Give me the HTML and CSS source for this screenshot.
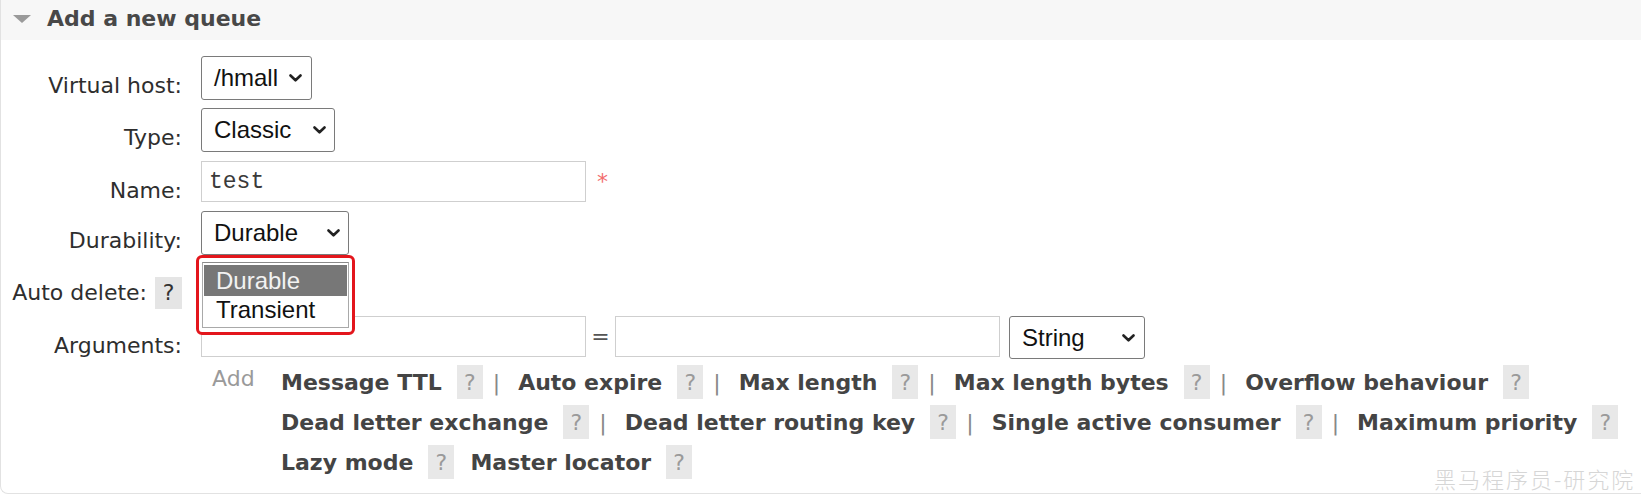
FILE: index.html
```html
<!DOCTYPE html>
<html lang="en">
<head>
<meta charset="utf-8">
<title>Add a new queue</title>
<link rel="stylesheet" href="styles.css">
</head>
<body>
<div class="panel">
  <div class="panel-head">
    <span class="tri"></span>
    <h2 class="title">Add a new queue</h2>
  </div>
  <div class="panel-body">
    <div class="row">
      <label class="lbl">Virtual host:</label>
      <div class="field">
        <div class="sel sel-vhost"><span>/hmall</span><svg class="chev" viewBox="0 0 13 8" width="13" height="8"><path d="M1.5 1.5 L6.5 6.3 L11.5 1.5" fill="none" stroke="#222" stroke-width="2.6" stroke-linecap="round" stroke-linejoin="round"/></svg></div>
      </div>
    </div>
    <div class="row row-type">
      <label class="lbl">Type:</label>
      <div class="field">
        <div class="sel sel-type"><span>Classic</span><svg class="chev" viewBox="0 0 13 8" width="13" height="8"><path d="M1.5 1.5 L6.5 6.3 L11.5 1.5" fill="none" stroke="#222" stroke-width="2.6" stroke-linecap="round" stroke-linejoin="round"/></svg></div>
      </div>
    </div>
    <div class="row row-name">
      <label class="lbl">Name:</label>
      <div class="field field-inline">
        <input class="inp inp-mono" type="text" value="test">
        <span class="req">*</span>
      </div>
    </div>
    <div class="row row-dur">
      <label class="lbl">Durability:</label>
      <div class="field field-dur">
        <div class="sel sel-dur"><span>Durable</span><svg class="chev" viewBox="0 0 13 8" width="13" height="8"><path d="M1.5 1.5 L6.5 6.3 L11.5 1.5" fill="none" stroke="#222" stroke-width="2.6" stroke-linecap="round" stroke-linejoin="round"/></svg></div>
        <div class="dropdown">
          <ul class="opts">
            <li class="opt-item is-active">Durable</li>
            <li class="opt-item">Transient</li>
          </ul>
        </div>
      </div>
    </div>
    <div class="row row-auto">
      <label class="lbl lbl-help"><span>Auto delete:</span><span class="qbox">?</span></label>
      <div class="field"></div>
    </div>
    <div class="row row-args">
      <label class="lbl">Arguments:</label>
      <div class="field field-inline">
        <input class="inp" type="text">
        <span class="eq">=</span>
        <input class="inp" type="text">
        <div class="sel sel-str"><span>String</span><svg class="chev" viewBox="0 0 13 8" width="13" height="8"><path d="M1.5 1.5 L6.5 6.3 L11.5 1.5" fill="none" stroke="#222" stroke-width="2.6" stroke-linecap="round" stroke-linejoin="round"/></svg></div>
      </div>
    </div>
    <div class="args-help">
      <span class="add">Add</span>
      <div class="help-lines">
        <div class="line">
          <span class="opt">Message TTL</span><span class="q">?</span><span class="sep">|</span>
          <span class="opt">Auto expire</span><span class="q">?</span><span class="sep">|</span>
          <span class="opt">Max length</span><span class="q">?</span><span class="sep">|</span>
          <span class="opt">Max length bytes</span><span class="q">?</span><span class="sep">|</span>
          <span class="opt">Overflow behaviour</span><span class="q">?</span>
        </div>
        <div class="line">
          <span class="opt">Dead letter exchange</span><span class="q">?</span><span class="sep">|</span>
          <span class="opt">Dead letter routing key</span><span class="q">?</span><span class="sep">|</span>
          <span class="opt">Single active consumer</span><span class="q">?</span><span class="sep">|</span>
          <span class="opt">Maximum priority</span><span class="q">?</span>
        </div>
        <div class="line">
          <span class="opt">Lazy mode</span><span class="q q-gap">?</span>
          <span class="opt">Master locator</span><span class="q">?</span>
        </div>
      </div>
    </div>
  </div>
  <div class="watermark">黑马程序员-研究院</div>
</div>
</body>
</html>
```

FILE: styles.css
```css
* { box-sizing: border-box; }
html, body { margin: 0; padding: 0; background: #fff; }
body {
  width: 1641px;
  height: 495px;
  overflow: hidden;
  font-family: "DejaVu Sans", Verdana, sans-serif;
  color: #333;
}
.panel {
  position: relative;
  height: 494px;
  border-left: 1px solid #e2e2e2;
  border-bottom: 1px solid #e2e2e2;
  border-bottom-left-radius: 8px;
  overflow: hidden;
}
.panel-head {
  display: flex;
  align-items: center;
  height: 40px;
  background: #f7f7f7;
}
.tri {
  width: 0;
  height: 0;
  margin-left: 12px;
  margin-top: -2px;
  border-left: 9px solid transparent;
  border-right: 9px solid transparent;
  border-top: 8px solid #9a9a9a;
}
.title {
  margin: 0 0 0 16px;
  font-size: 22px;
  font-weight: bold;
  color: #484848;
  line-height: 26px;
  margin-top: -2px;
}
.panel-body {
  padding-top: 16px;
}
.row {
  display: flex;
  align-items: flex-start;
}
.row-type { margin-top: 8px; }
.row-name { margin-top: 9px; }
.row-dur { margin-top: 9px; }
.row-auto { margin-top: 9px; }
.row-args { margin-top: 7px; }
.lbl {
  width: 181px;
  flex: none;
  text-align: right;
  font-size: 22px;
  line-height: 20px;
  padding-top: 20px;
  height: 40px;
  color: #2e2e2e;
}
.lbl-help {
  display: flex;
  justify-content: flex-end;
  align-items: center;
  gap: 8px;
  padding-top: 13px;
  height: 45px;
  line-height: 26px;
}
.qbox {
  display: inline-flex;
  align-items: center;
  justify-content: center;
  width: 27px;
  height: 32px;
  background: #e5e5e5;
  color: #333;
  font-size: 22px;
}
.field {
  margin-left: 19px;
}
.field-inline {
  display: flex;
  align-items: center;
}
.field-dur {
  position: relative;
}
.sel {
  display: flex;
  align-items: center;
  justify-content: space-between;
  height: 44px;
  border: 1px solid #7a7a7a;
  border-radius: 3px;
  background: #fff;
  padding-left: 12px;
  padding-right: 8px;
  font-family: "Liberation Sans", Arial, sans-serif;
  font-size: 24px;
  color: #111;
}
.sel-vhost { width: 111px; padding-right: 9px; }
.sel-type { width: 134px; }
.sel-dur { width: 148px; }
.sel-str { width: 136px; margin-left: 9px; height: 43px; padding-right: 9px; }
.chev { flex: none; }
.inp {
  width: 385px;
  height: 41px;
  border: 1px solid #cfcfcf;
  border-radius: 0;
  padding: 0 7px;
  margin: 0;
  font-family: "Liberation Mono", "Courier New", monospace;
  font-size: 23px;
  color: #3a3a3a;
  background: #fff;
  outline: none;
}
.row-args .field-inline { align-items: flex-start; }
.eq {
  width: 29px;
  text-align: center;
  font-size: 22px;
  line-height: 41px;
  color: #555;
}
.req {
  margin-left: 11px;
  color: #f26d6d;
  font-size: 22px;
  line-height: 26px;
}
.dropdown {
  position: absolute;
  left: -5px;
  top: 44px;
  width: 159px;
  height: 80px;
  border: 3px solid #e3161c;
  border-radius: 6px;
  background: #fff;
  padding: 4px 3px;
  z-index: 2;
}
.opts {
  list-style: none;
  margin: 0;
  padding: 2px 1px 0 1px;
  height: 66px;
  border: 1px solid #a9a9a9;
  border-top-color: #8a8a8a;
}
.opt-item {
  height: 31px;
  line-height: 31px;
  padding-left: 12px;
  font-family: "Liberation Sans", Arial, sans-serif;
  font-size: 24px;
  color: #111;
}
.opt-item + .opt-item { height: 30px; line-height: 28px; }
.opt-item.is-active {
  background: #777;
  color: #f2f2f2;
}
.args-help {
  display: flex;
  align-items: flex-start;
  margin-left: 211px;
  margin-top: 3px;
}
.add {
  width: 69px;
  flex: none;
  color: #9a9a9a;
  font-size: 22px;
  line-height: 26px;
  padding-top: 4px;
}
.line {
  display: flex;
  align-items: center;
  height: 40px;
  white-space: nowrap;
}
.opt {
  font-weight: bold;
  font-size: 22px;
  color: #444;
}
.q {
  display: inline-flex;
  align-items: center;
  justify-content: center;
  width: 26px;
  height: 34px;
  margin-left: 15px;
  background: #e8e8e8;
  color: #9a9a9a;
  font-size: 22px;
}
.q-gap { margin-right: 16px; }
.sep {
  margin: 0 18px 0 10px;
  color: #888;
  font-size: 22px;
}
.watermark {
  position: absolute;
  left: 1433px;
  top: 465px;
  font-family: "Noto Sans CJK SC", sans-serif;
  font-size: 22px;
  line-height: 26px;
  letter-spacing: 2px;
  color: #d6d6d6;
  white-space: nowrap;
  font-weight: 300;
}
```
